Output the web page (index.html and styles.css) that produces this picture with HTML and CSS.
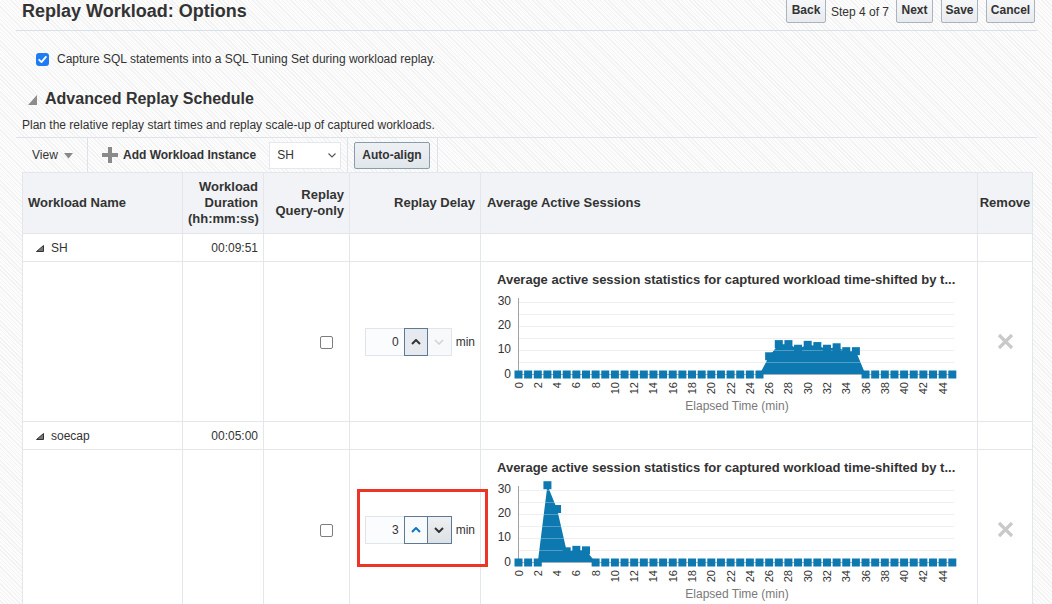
FILE: index.html
```html
<!DOCTYPE html>
<html>
<head>
<meta charset="utf-8">
<title>Replay Workload: Options</title>
<link rel="stylesheet" href="styles.css">
</head>
<body>
<header class="page-header">
  <h1 class="page-title">Replay Workload: Options</h1>
  <div class="train">
    <button class="btn btn-back">Back</button>
    <span class="step">Step 4 of 7</span>
    <button class="btn btn-next">Next</button>
    <button class="btn btn-save">Save</button>
    <button class="btn btn-cancel">Cancel</button>
  </div>
</header>

<div class="option-row">
  <span class="check-on"><svg width="13" height="13" viewBox="0 0 13 13"><rect x="0" y="0" width="13" height="13" rx="3" fill="#1f7cf4"/><polyline points="3.2,6.8 5.5,9.1 9.9,3.9" fill="none" stroke="#fff" stroke-width="1.8" stroke-linecap="round" stroke-linejoin="round"/></svg></span>
  <span>Capture SQL statements into a SQL Tuning Set during workload replay.</span>
</div>

<h2 class="section-title"><svg class="disclose" width="9" height="10" viewBox="0 0 9 10"><polygon points="9,0 9,10 0,10" fill="#8c8c8c"/></svg>Advanced Replay Schedule</h2>
<p class="section-desc">Plan the relative replay start times and replay scale-up of captured workloads.</p>

<div class="toolbar">
  <div class="tb-group tb-view">View <svg class="caret" width="9" height="6" viewBox="0 0 9 6"><polygon points="0,0 9,0 4.5,5.5" fill="#888"/></svg></div>
  <div class="tb-group tb-add">
    <svg class="plus" width="16" height="16" viewBox="0 0 16 16"><rect x="6" y="0" width="4" height="16" fill="#8a8a8a"/><rect x="0" y="6" width="16" height="4" fill="#8a8a8a"/></svg>
    <span class="tb-label">Add Workload Instance</span>
    <span class="select">SH<svg width="8" height="5" viewBox="0 0 8 5"><polyline points="0.5,0.5 4,4 7.5,0.5" fill="none" stroke="#555" stroke-width="1.1"/></svg></span>
  </div>
  <div class="tb-group tb-align"><button class="btn btn-align">Auto-align</button></div>
</div>

<table class="grid">
  <colgroup>
    <col class="c-name"><col class="c-dur"><col class="c-qo"><col class="c-delay"><col class="c-aas"><col class="c-rm">
  </colgroup>
  <thead>
    <tr>
      <th class="left">Workload Name</th>
      <th class="right">Workload<br>Duration<br>(hh:mm:ss)</th>
      <th class="right">Replay<br>Query-only</th>
      <th class="right">Replay Delay</th>
      <th class="left aas-h">Average Active Sessions</th>
      <th class="center">Remove</th>
    </tr>
  </thead>
  <tbody>
    <tr class="group-row">
      <td class="gname"><svg class="expand" width="8" height="7" viewBox="0 0 8 7"><polygon points="7.5,0.5 7.5,6.5 0.5,6.5" fill="#777" stroke="#333" stroke-width="1"/></svg>SH</td>
      <td class="right">00:09:51</td>
      <td></td><td></td><td></td><td></td>
    </tr>
    <tr class="detail-row">
      <td></td>
      <td></td>
      <td class="qo"><span class="box"></span></td>
      <td class="delay">
        <span class="spinner">
          <span class="spin-input">0</span>
          <span class="spin-btn up active"><svg width="10" height="6" viewBox="0 0 10 6"><polyline points="1,5 5,1 9,5" fill="none" stroke="#333" stroke-width="2"/></svg></span>
          <span class="spin-btn down disabled"><svg width="10" height="6" viewBox="0 0 10 6"><polyline points="1,1 5,5 9,1" fill="none" stroke="#cfd3d7" stroke-width="1.5"/></svg></span>
          <span class="unit">min</span>
        </span>
      </td>
      <td class="aas">
        <div class="chart-title">Average active session statistics for captured workload time-shifted by t...</div>
        <svg class="ash-chart" width="480" height="125" data-values="0,0,0,0,0,0,0,0,0,0,0,0,0,0,0,0,0,0,0,0,0,0,0,0,0,0,7.5,12.5,12.5,10.6,12.2,11.7,10.6,11.2,9.6,9.6,0,0,0,0,0,0,0,0,0,0"></svg>
      </td>
      <td class="rm"><svg width="17" height="17" viewBox="0 0 17 17"><path d="M2 2 L15 15 M15 2 L2 15" stroke="#c9c9c9" stroke-width="3.2"/></svg></td>
    </tr>
    <tr class="group-row">
      <td class="gname"><svg class="expand" width="8" height="7" viewBox="0 0 8 7"><polygon points="7.5,0.5 7.5,6.5 0.5,6.5" fill="#777" stroke="#333" stroke-width="1"/></svg>soecap</td>
      <td class="right">00:05:00</td>
      <td></td><td></td><td></td><td></td>
    </tr>
    <tr class="detail-row">
      <td></td>
      <td></td>
      <td class="qo"><span class="box"></span></td>
      <td class="delay">
        <span class="spinner marked">
          <span class="spin-input">3</span>
          <span class="spin-btn up live"><svg width="10" height="6" viewBox="0 0 10 6"><polyline points="1,5 5,1 9,5" fill="none" stroke="#0a74c9" stroke-width="2"/></svg></span>
          <span class="spin-btn down pressed"><svg width="10" height="6" viewBox="0 0 10 6"><polyline points="1,1 5,5 9,1" fill="none" stroke="#333" stroke-width="2"/></svg></span>
          <span class="unit">min</span>
          <span class="highlight"></span>
        </span>
      </td>
      <td class="aas">
        <div class="chart-title">Average active session statistics for captured workload time-shifted by t...</div>
        <svg class="ash-chart" width="480" height="125" data-values="0,0,0,31.8,22,4.6,5.2,5,0,0,0,0,0,0,0,0,0,0,0,0,0,0,0,0,0,0,0,0,0,0,0,0,0,0,0,0,0,0,0,0,0,0,0,0,0,0"></svg>
      </td>
      <td class="rm"><svg width="17" height="17" viewBox="0 0 17 17"><path d="M2 2 L15 15 M15 2 L2 15" stroke="#c9c9c9" stroke-width="3.2"/></svg></td>
    </tr>
  </tbody>
</table>
<script src="script.js"></script>
</body>
</html>
```

FILE: styles.css
```css
* { box-sizing: border-box; }
html, body { margin: 0; padding: 0; }
body {
  width: 1052px;
  height: 604px;
  overflow: hidden;
  font-family: "Liberation Sans", Arial, Helvetica, sans-serif;
  font-size: 12px;
  color: #333;
  background: repeating-linear-gradient(45deg, #fcfcfc 0, #fcfcfc 2px, #f2f2f2 2px, #f2f2f2 3px);
}

/* header */
.page-header {
  display: flex;
  justify-content: space-between;
  align-items: flex-start;
  margin: 0 15px 0 16px;
  height: 31px;
  border-bottom: 1px solid #d9e1e8;
}
.page-title {
  margin: 0;
  padding-left: 6px;
  font-size: 18px;
  line-height: 22px;
  font-weight: bold;
  color: #333;
}
.train {
  display: flex;
  align-items: center;
  margin-top: -4px;
  padding-right: 2px;
}
.btn {
  height: 27px;
  padding: 0;
  font-family: "Liberation Sans", Arial, sans-serif;
  font-size: 12px;
  font-weight: bold;
  color: #333;
  background: linear-gradient(#f7f8f9, #e8ebee);
  border: 1px solid #a9b4bf;
  border-radius: 2px;
}
.btn-back { width: 40px; }
.btn-next { width: 37px; }
.btn-save { width: 37px; margin-left: 8px; }
.btn-cancel { width: 49px; margin-left: 8px; }
.step { width: 58px; margin: 4px 7px 0 5px; white-space: nowrap; }

/* option */
.option-row {
  display: flex;
  align-items: center;
  gap: 8px;
  height: 16px;
  margin-top: 20px;
  padding-left: 36px;
}
.check-on { display: flex; }

.section-title {
  display: flex;
  align-items: center;
  margin: 22px 0 0;
  padding-left: 28px;
  height: 20px;
  font-size: 16px;
  font-weight: bold;
  color: #333;
}
.disclose { margin-right: 8px; margin-top: 1px; }
.section-desc {
  margin: 9px 0 0;
  padding-left: 22px;
  line-height: 14px;
}

/* toolbar */
.toolbar {
  display: flex;
  margin: 5px 15px 0 16px;
  height: 35px;
  border-top: 1px solid #dde3ea;
}
.tb-group {
  display: flex;
  align-items: center;
  border-right: 1px solid #dde3ea;
}
.tb-view { width: 72px; padding-left: 16px; color: #333; }
.caret { margin-left: 6px; margin-top: 1px; }
.tb-add { width: 260px; padding-left: 14px; }
.plus { margin-right: 5px; }
.tb-label { font-weight: bold; }
.select {
  display: flex;
  align-items: center;
  justify-content: space-between;
  margin-left: 13px;
  width: 72px;
  height: 27px;
  padding: 0 4px 0 7px;
  background: #fff;
  border: 1px solid #e4e8ec;
}
.tb-align { width: 90px; padding-left: 6px; }
.btn-align { width: 76px; height: 27px; padding: 0; background: linear-gradient(#eef1f4, #e1e6eb); border-color: #8a9bab; }

/* table */
.grid {
  margin-left: 22px;
  width: 1010px;
  table-layout: fixed;
  border-collapse: collapse;
  background: #fff;
}
.c-name { width: 160px; }
.c-dur { width: 81px; }
.c-qo { width: 86px; }
.c-delay { width: 131px; }
.c-aas { width: 497px; }
.c-rm { width: 55px; }
.grid th, .grid td {
  border: 1px solid #e3e7ec;
  padding: 0 5px;
}
.grid th {
  height: 61px;
  background: #f1f3f6;
  font-size: 13px;
  font-weight: bold;
  line-height: 16px;
  color: #333;
  vertical-align: middle;
}
.grid .left { text-align: left; }
.grid .right { text-align: right; }
.grid .center { text-align: center; padding: 0; }
.grid th.aas-h { padding-left: 6px; }

.group-row td { height: 28px; vertical-align: middle; }
.gname { padding-left: 13px !important; }
.expand { margin-right: 7px; vertical-align: 0; }

.detail-row td { height: 160px; vertical-align: middle; }
.qo { text-align: right; padding-right: 16px !important; }
.box {
  display: inline-block;
  width: 13px;
  height: 13px;
  border: 1px solid #7d7d7d;
  border-radius: 2px;
  background: #fff;
  vertical-align: middle;
}
.delay { text-align: right; }
.spinner {
  position: relative;
  display: inline-flex;
  align-items: center;
  vertical-align: middle;
}
.spin-input {
  width: 39px;
  height: 28px;
  line-height: 26px;
  padding-right: 5px;
  text-align: right;
  background: #fbfcfd;
  border: 1px solid #dfe5ea;
  border-right: none;
}
.spin-btn {
  display: flex;
  align-items: center;
  justify-content: center;
  width: 24px;
  height: 28px;
  border: 1px solid #dfe5ea;
}
.spin-btn.down { border-left: none; }
.spin-btn.active { background: #e6eaee; border-color: #5c7a93; }
.spin-btn.disabled { background: #f8f9fa; }
.spin-btn.live { background: #f9fafb; border-color: #5c7a93; }
.spin-btn.pressed { background: linear-gradient(#eef0f2, #dde1e5); border-color: #5c7a93; }
.unit { margin-left: 4px; }
.highlight {
  position: absolute;
  left: -8px;
  right: -13px;
  top: -27px;
  bottom: -23px;
  border: 3px solid #ee3426;
}

.detail-row td.aas {
  vertical-align: top;
  padding: 10px 0 0 6px;
}
.chart-title {
  width: 466px;
  margin-left: 10px;
  font-size: 13px;
  font-weight: bold;
  line-height: 16px;
  white-space: nowrap;
  color: #333;
}
.ash-chart { display: block; margin-top: 3px; }
.ash-chart .grid-line { stroke: #e7e9ec; stroke-width: 1; }
.ash-chart .grid-over { stroke: rgba(255,255,255,0.28); stroke-width: 1; }
.ash-chart .base-line { stroke: #9fb0bd; stroke-width: 1; }
.ash-chart .axis { stroke: #a3a3a3; stroke-width: 1; }
.ash-chart .area { fill: #0d79b0; }
.ash-chart .marker { fill: #0d79b0; }
.ash-chart .ylab { font-size: 12px; fill: #333; font-family: "Liberation Sans", Arial, sans-serif; }
.ash-chart .xlab { font-size: 11px; fill: #333; font-family: "Liberation Sans", Arial, sans-serif; }
.ash-chart .xtitle { font-size: 12px; fill: #7a7a7a; font-family: "Liberation Sans", Arial, sans-serif; }

.rm { text-align: center; padding: 0 !important; }
.rm svg { vertical-align: middle; }
```

FILE: script.js
```js
(function () {
  var NS = 'http://www.w3.org/2000/svg';
  function el(name, attrs, parent) {
    var e = document.createElementNS(NS, name);
    for (var k in attrs) e.setAttribute(k, attrs[k]);
    parent.appendChild(e);
    return e;
  }
  var charts = document.querySelectorAll('svg.ash-chart');
  for (var c = 0; c < charts.length; c++) {
    var svg = charts[c];
    var data = svg.getAttribute('data-values').split(',').map(Number);
    var x0 = 31.5, dx = 9.64, base = 83.5, ky = 2.43, x1 = 467;
    var v, y, i;
    for (v = 5; v <= 30; v += 5) {
      y = Math.round(base - v * ky) + 0.5;
      el('line', { x1: x0, x2: x1, y1: y, y2: y, 'class': 'grid-line' }, svg);
    }
    [0, 10, 20, 30].forEach(function (val) {
      var t = el('text', { x: 24, y: base - val * ky + 3, 'text-anchor': 'end', 'class': 'ylab' }, svg);
      t.textContent = val;
    });
    var pts = [x0 + ',' + base];
    for (i = 0; i < data.length; i++) pts.push((x0 + i * dx).toFixed(2) + ',' + (base - data[i] * ky).toFixed(2));
    pts.push((x0 + (data.length - 1) * dx).toFixed(2) + ',' + base);
    el('polygon', { points: pts.join(' '), 'class': 'area' }, svg);
    for (v = 5; v <= 30; v += 5) {
      y = Math.round(base - v * ky) + 0.5;
      el('line', { x1: x0, x2: x1, y1: y, y2: y, 'class': 'grid-over' }, svg);
    }
    el('line', { x1: x0, x2: x1, y1: base, y2: base, 'class': 'base-line' }, svg);
    el('line', { x1: x0, x2: x0, y1: 7, y2: base, 'class': 'axis' }, svg);
    for (i = 0; i < data.length; i++) {
      el('rect', { x: (x0 + i * dx - 4).toFixed(2), y: (base - data[i] * ky - 4).toFixed(2), width: 8, height: 8, 'class': 'marker' }, svg);
    }
    for (var m = 0; m <= 44; m += 2) {
      var x = x0 + m * dx + 4;
      var t = el('text', { x: 0, y: 0, transform: 'translate(' + x.toFixed(2) + ',91) rotate(-90)', 'text-anchor': 'end', 'class': 'xlab' }, svg);
      t.textContent = m;
    }
    var tt = el('text', { x: 250, y: 119, 'text-anchor': 'middle', 'class': 'xtitle' }, svg);
    tt.textContent = 'Elapsed Time (min)';
  }
})();
```
